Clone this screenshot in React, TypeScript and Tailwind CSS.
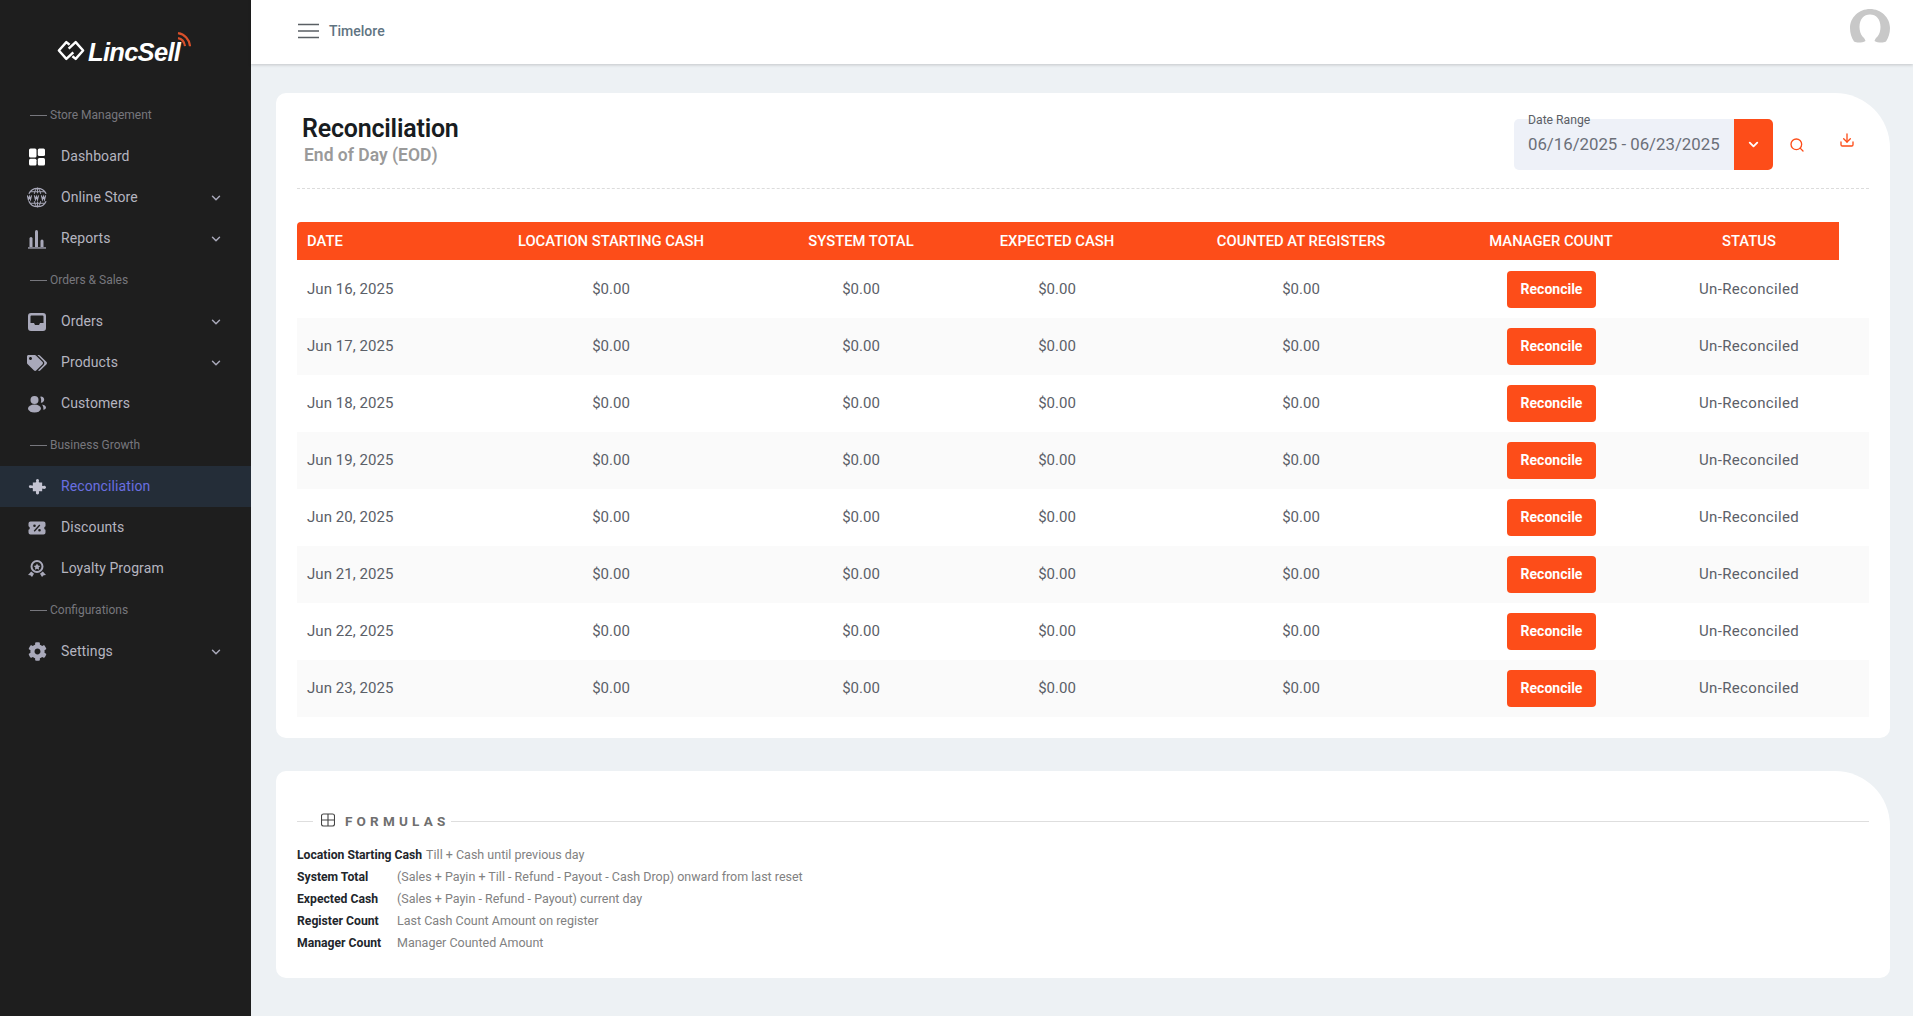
import React from "react";
import { FaTags, FaCog } from "react-icons/fa";
import { LuChevronDown, LuSearch, LuDownload } from "react-icons/lu";

const iconCls = "w-[18px] h-[18px] text-[#a9a9ba]";

const DashIcon = () => (
  <svg viewBox="0 0 18 18" className="w-[18px] h-[18px]" fill="#fff">
    <rect x="1" y="0.500" width="7.500" height="9" rx="1.500" />
    <rect x="9.800" y="0.500" width="7.200" height="7.500" rx="1.500" />
    <rect x="1" y="10.800" width="7.500" height="6.700" rx="1.500" />
    <rect x="9.800" y="10" width="7.200" height="7.500" rx="1.500" />
  </svg>
);
const GlobeIcon = () => (
  <svg viewBox="0 0 20 20" className="w-[21px] h-[21px] text-[#a9a9ba]" fill="none" stroke="currentColor" strokeWidth="1.200">
    <path d="M1.800 6.500A9 9 0 0 1 18.200 6.500" />
    <path d="M1.800 13.500A9 9 0 0 0 18.200 13.500" />
    <path d="M7 6.500C7.500 3.500 8.500 1.500 10 1c1.500.5 2.500 2.500 3 5.500M7 13.500c.5 3 1.500 5 3 5.500 1.500-.5 2.500-2.500 3-5.500M10 1v5M10 14v5M3.500 4.500h13M3.500 15.500h13" strokeWidth="0.900" />
    <path d="M0.300 8l1 4 1-3 1 3 1-4M7 8l1 4 1-3 1 3 1-4M13.700 8l1 4 1-3 1 3 1-4" strokeWidth="1.100" />
  </svg>
);
const BarsIcon = () => (
  <svg viewBox="0 0 18 20" className="w-[18px] h-[20px] text-[#a9a9ba]" fill="currentColor">
    <path d="M1.500 9.500a1.500 1.500 0 0 1 3 0V18h-3z" />
    <path d="M7 2.500a1.500 1.500 0 0 1 3 0V18H7z" />
    <path d="M12.500 12a1.500 1.500 0 0 1 3 0v6h-3z" />
    <rect x="0" y="18.300" width="18" height="1.300" />
  </svg>
);
const InboxIcon = () => (
  <svg viewBox="0 0 18 18" className={iconCls} fill="currentColor">
    <path fillRule="evenodd" d="M3 0h12a3 3 0 0 1 3 3v12a3 3 0 0 1-3 3H3a3 3 0 0 1-3-3V3a3 3 0 0 1 3-3zM3.500 2.500a1 1 0 0 0-1 1V10H6l1 2h4l1-2h3.500V3.500a1 1 0 0 0-1-1z" />
  </svg>
);
const UsersIcon = () => (
  <svg viewBox="0 0 18 18" className={iconCls} fill="currentColor">
    <circle cx="6.500" cy="5" r="4" />
    <ellipse cx="6.500" cy="13.500" rx="6.500" ry="4" />
    <path d="M12.200 1.800a3 3 0 1 1 .6 5.800c.7-1.800.5-4-.6-5.800zM14 9.500c2.200.3 4 1.500 4 3 0 1.200-1 2-2.700 2.300.300-2-.100-3.800-1.300-5.300z" />
  </svg>
);
const PuzzleIcon = () => (
  <svg viewBox="0 0 18 18" className="w-[21px] h-[21px] text-[#c4c4d2]" fill="currentColor">
    <path d="M5 5.500h2.200c.8 0 .8-.6.6-1.200-.3-.9.2-1.800 1.200-1.800s1.500.9 1.200 1.800c-.2.600-.2 1.200.6 1.200H13v2.600c0 .5.500.6 1 .4.900-.4 2.300 0 2.300 1.200s-1.400 1.600-2.300 1.200c-.5-.2-1-.1-1 .4V13h-2.200c-.7 0-.7.500-.5 1 .3.900-.3 1.800-1.300 1.800s-1.600-.9-1.300-1.800c.2-.5.2-1-.5-1H5v-2.200c0-.5-.4-.7-1-.5-.9.300-2.400 0-2.400-1.200S3.100 7.900 4 8.200c.6.200 1 0 1-.5V5.500z" />
  </svg>
);
const TicketIcon = () => (
  <svg viewBox="0 0 18 18" className={iconCls} fill="currentColor">
    <path fillRule="evenodd" d="M2.500 2.500h13A2 2 0 0 1 17.500 4.500v2.700a1.900 1.900 0 0 0 0 3.600v2.700a2 2 0 0 1-2 2h-13a2 2 0 0 1-2-2v-2.700a1.900 1.900 0 0 0 0-3.600V4.500a2 2 0 0 1 2-2zM11.300 5.500l-5.600 6.300 1 .9 5.600-6.300zM6.500 5.500a1.300 1.300 0 1 0 0 2.600 1.300 1.300 0 0 0 0-2.600zM11.500 9.900a1.300 1.300 0 1 0 0 2.600 1.300 1.300 0 0 0 0-2.600z" />
  </svg>
);
const AwardIcon = () => (
  <svg viewBox="0 0 18 18" className={iconCls} fill="currentColor">
    <path fillRule="evenodd" d="M9 0a6.500 6.500 0 1 1 0 13A6.500 6.500 0 0 1 9 0zm0 2a4.500 4.500 0 1 0 0 9 4.500 4.500 0 0 0 0-9z" />
    <path d="M9 3.500l1.100 2.100 2.200.3-1.600 1.600.4 2.300L9 8.700l-2.100 1.100.4-2.300-1.600-1.600 2.200-.3z" />
    <path d="M3.200 11.500l2.800 2.300-2 3.200-1.700-1.800-2.300-.2zM14.800 11.500l-2.800 2.300 2 3.200 1.700-1.800 2.300-.2z" />
  </svg>
);

type Item = { kind: "section"; label: string } | { kind: "item"; label: string; icon: React.ReactNode; chevron?: boolean; active?: boolean };
const nav: Item[] = [
  { kind: "section", label: "Store Management" },
  { kind: "item", label: "Dashboard", icon: <DashIcon /> },
  { kind: "item", label: "Online Store", icon: <GlobeIcon />, chevron: true },
  { kind: "item", label: "Reports", icon: <BarsIcon />, chevron: true },
  { kind: "section", label: "Orders & Sales" },
  { kind: "item", label: "Orders", icon: <InboxIcon />, chevron: true },
  { kind: "item", label: "Products", icon: <FaTags className="w-[20px] h-[20px] text-[#a9a9ba]" />, chevron: true },
  { kind: "item", label: "Customers", icon: <UsersIcon /> },
  { kind: "section", label: "Business Growth" },
  { kind: "item", label: "Reconciliation", icon: <PuzzleIcon />, active: true },
  { kind: "item", label: "Discounts", icon: <TicketIcon /> },
  { kind: "item", label: "Loyalty Program", icon: <AwardIcon /> },
  { kind: "section", label: "Configurations" },
  { kind: "item", label: "Settings", icon: <FaCog className="w-[19px] h-[19px] text-[#a9a9ba]" />, chevron: true },
];

const days = ["Jun 16, 2025", "Jun 17, 2025", "Jun 18, 2025", "Jun 19, 2025", "Jun 20, 2025", "Jun 21, 2025", "Jun 22, 2025", "Jun 23, 2025"];
const heads = ["LOCATION STARTING CASH", "SYSTEM TOTAL", "EXPECTED CASH", "COUNTED AT REGISTERS", "MANAGER COUNT", "STATUS"];
const cols = "grid grid-cols-[158px_312px_188px_204px_284px_216px_180px] items-center";

const formulas = [
  ["Location Starting Cash", "Till + Cash until previous day"],
  ["System Total", "(Sales + Payin + Till - Refund - Payout - Cash Drop) onward from last reset"],
  ["Expected Cash", "(Sales + Payin - Refund - Payout) current day"],
  ["Register Count", "Last Cash Count Amount on register"],
  ["Manager Count", "Manager Counted Amount"],
];

function Logo() {
  return (
    <div className="h-[94px] flex items-start pl-[57px] pt-[30px]">
      <svg viewBox="0 0 30 22" className="w-[28px] h-[21px] mt-[10px] shrink-0" fill="none" stroke="#fff" strokeWidth="2.600" strokeLinejoin="round">
        <path d="M13.500 4.800 10 2 2 11l8 9 7.500-7" />
        <path d="M16.500 17.200 20 20l8-9-8-9-7.500 7" />
      </svg>
      <span className="ml-[3px] mt-[3px] text-[25.5px] leading-[38px] font-bold italic text-white tracking-[-0.7px] font-['Liberation_Sans',sans-serif]">LincSell</span>
      <svg viewBox="0 0 14 16" className="w-[14px] h-[16px] ml-[-3px] mt-[2px] shrink-0" fill="none" stroke="#d9502a" strokeWidth="2.200">
        <path d="M1 1.200c6.500 1 11.500 6 12 13" />
        <path d="M1 6.200c3.500.6 6.300 3.400 7 8" />
      </svg>
    </div>
  );
}

export default function App() {
  return (
    <div className="flex w-full min-h-[1016px] bg-[#edf1f4] font-['Roboto',sans-serif]">
      <aside className="w-[251px] shrink-0 bg-[#1e1e1e] min-h-[1016px]">
        <Logo />
        <nav>
          {nav.map((n) =>
            n.kind === "section" ? (
              <div key={n.label} className="h-[42px] flex items-center pl-[30px] text-[12px] text-[#77777d]">
                <span className="w-[17px] h-px bg-[#77777d] mr-[3px]" />
                {n.label}
              </div>
            ) : (
              <div key={n.label} className={`h-[41px] flex items-center pl-[26px] pr-[28px] text-[14px] ${n.active ? "bg-[#242d38] text-[#6a6fe0]" : "text-[#b5b5c0]"}`}>
                <span className="w-[22px] h-[22px] flex items-center justify-center shrink-0 mr-[13px]">{n.icon}</span>
                <span className="flex-1 tracking-[0.1px]">{n.label}</span>
                {n.chevron && <LuChevronDown className="w-[14px] h-[14px] text-[#a9a9ba]" strokeWidth={2.5} />}
              </div>
            )
          )}
        </nav>
      </aside>
      <main className="flex-1 min-w-0">
        <header className="h-[64px] bg-white shadow-[0_1px_3px_rgba(0,0,0,0.18)] flex items-center pl-[47px] pr-[23px]">
          <svg viewBox="0 0 21 16" className="w-[21px] h-[16px] mb-[2px]" fill="none" stroke="#5a5f64" strokeWidth="1.500">
            <path d="M0 1.500h21M0 8h21M0 14.500h21" />
          </svg>
          <span className="ml-[10px] mb-[2px] text-[14px] font-medium text-[#5f7482]">Timelore</span>
          <svg viewBox="0 0 40 34" className="ml-auto w-[40px] h-[34px] mb-[12px]" fill="#c8c8c8">
            <path d="M20 0C9 0 0 8.500 0 19c0 5 1.500 10 4 13.500 3.500 2 8.500 1 11.500-.5-.5-2-1.500-3-3-4.500-2-2.500-3-6-3-9.500C9.500 10 14 5.500 20 5.500S30.500 10 30.500 18c0 3.500-1 7-3 9.500-1.500 1.500-2.500 2.500-3 4.500 3 1.500 8 2.500 11.500.5C38.500 29 40 24 40 19 40 8.500 31 0 20 0z" />
          </svg>
        </header>

        <section className="mt-[29px] ml-[25px] mr-[23px] bg-white rounded-tl-[10px] rounded-bl-[10px] rounded-br-[10px] rounded-tr-[55px] px-[21px] pt-[21px] h-[645px]">
          <div className="h-[75px] border-b border-dashed border-[#dcdcdc] flex items-start">
            <div className="flex-1">
              <h1 className="text-[25px] leading-[30px] font-semibold text-[#181c21] ml-[5px] tracking-[-0.2px]">Reconciliation</h1>
              <p className="text-[17.5px] leading-[24px] font-semibold text-[#9a9a9a] ml-[7px] -mt-[1px]">End of Day (EOD)</p>
            </div>
            <div className="relative flex mt-[5px]">
              <div className="w-[220px] h-[51px] bg-[#eef1f8] rounded-l-[5px] flex items-center pl-[14px] text-[16.8px] text-[#6b6f78]">06/16/2025 - 06/23/2025</div>
              <span className="absolute left-[14px] -top-[6px] text-[12.2px] leading-[14px] text-[#5c5f66]">Date Range</span>
              <div className="w-[39px] h-[51px] bg-[#fd4d19] rounded-r-[5px] flex items-center justify-center">
                <LuChevronDown className="w-[15px] h-[15px] text-white" strokeWidth={3} />
              </div>
              <LuSearch className="w-[16px] h-[16px] text-[#fd4d19] ml-[16px] mt-[18px]" />
              <div className="w-[64px] flex justify-end pr-[14px]">
                <LuDownload className="w-[16px] h-[16px] text-[#fd4d19] mt-[13px]" />
              </div>
            </div>
          </div>

          <div className="mt-[33px]">
            <div className={`${cols} w-[1542px] h-[38px] bg-[#fd4d19] rounded-tl-[4px] text-white text-[14.8px] font-medium`}>
              <span className="pl-[10px] pt-[1px]">DATE</span>
              {heads.map((h) => (
                <span key={h} className="text-center pt-[1px]">{h}</span>
              ))}
            </div>
            <div className="mt-[1px]">
              {days.map((d, i) => (
                <div key={d} className={`${cols} h-[57px] text-[15px] text-[#5b6068] ${i % 2 ? "bg-[#fafafa]" : "bg-white"}`}>
                  <span className="pl-[10px] tracking-[0.05px]">{d}</span>
                  <span className="text-center">$0.00</span>
                  <span className="text-center">$0.00</span>
                  <span className="text-center">$0.00</span>
                  <span className="text-center">$0.00</span>
                  <span className="flex justify-center">
                    <button className="w-[89px] h-[37px] bg-[#fd4d19] rounded-[4px] text-white text-[14px] font-bold pl-[1px]">Reconcile</button>
                  </span>
                  <span className="text-center tracking-[0.35px]">Un-Reconciled</span>
                </div>
              ))}
            </div>
          </div>
        </section>

        <section className="mt-[33px] ml-[25px] mr-[23px] bg-white rounded-tl-[10px] rounded-bl-[10px] rounded-br-[10px] rounded-tr-[55px] px-[21px] h-[207px] pt-[40px]">
          <div className="flex items-center">
            <span className="w-[16px] h-px bg-[#dedede]" />
            <svg viewBox="0 0 14 14" className="w-[14px] h-[14px] ml-[8px] mb-[2px]" fill="none" stroke="#444" strokeWidth="1.100">
              <rect x="0.500" y="1" width="13" height="12" rx="2" />
              <path d="M0.500 7h13M7 1v12" />
            </svg>
            <span className="ml-[10px] mr-[1px] text-[13.5px] font-bold tracking-[4.2px] text-[#6f6f6f]">FORMULAS</span>
            <span className="flex-1 h-px bg-[#dedede]" />
          </div>
          <div className="mt-[13px] text-[12.5px] leading-[22px]">
            {formulas.map(([a, b], i) => (
              <div key={a} className="flex">
                <span className={`font-bold text-[12.2px] text-[#22262b] ${i === 0 ? "mr-[4px]" : "w-[100px]"}`}>{a}</span>
                <span className="text-[#818181]">{b}</span>
              </div>
            ))}
          </div>
        </section>
      </main>
    </div>
  );
}
